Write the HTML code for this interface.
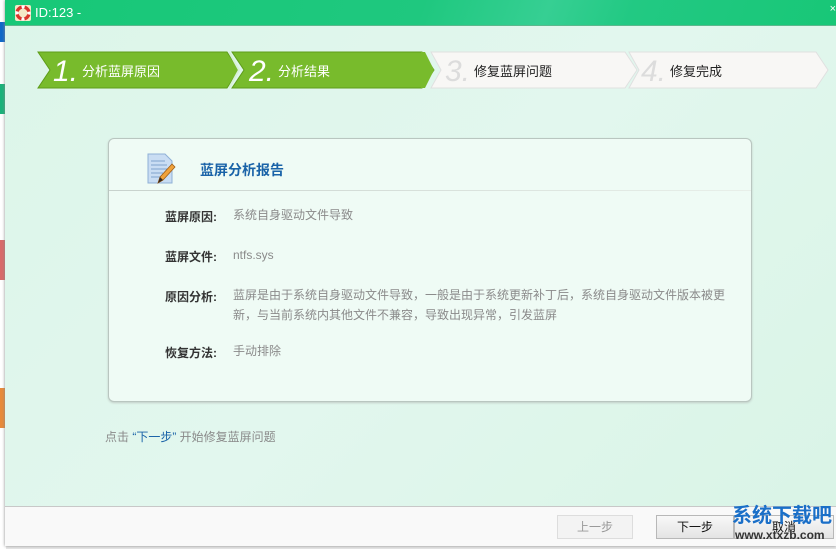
<!DOCTYPE html>
<html><head><meta charset="utf-8"><style>
*{margin:0;padding:0;box-sizing:border-box}
body{width:836px;height:549px;overflow:hidden;position:relative;background:#e8e8e8;font-family:"Liberation Sans","Noto Sans CJK SC",sans-serif;font-size:12px}
.left{position:absolute;left:0;top:0;width:6px;height:549px;background:#fff}
.win{position:absolute;left:5px;top:0;width:831px;height:546px;background:linear-gradient(135deg,#dcf5e9,#e2f7ee 50%,#d9f4e6);box-shadow:0 0 3px #888}
.title{position:absolute;left:0;top:0;width:831px;height:26px;background:linear-gradient(110deg,#17c877 0%,#1fc87f 50%,#36cf93 65%,#22c983 75%,#18c777 100%);border-bottom:1px solid #5cb88d;color:#fff;font-size:13px}
.card{position:absolute;left:103px;top:138px;width:644px;height:264px;background:#effbf5;border:1px solid #b9c6c0;border-radius:6px;box-shadow:0 1px 2px #c0ccc6}
.lbl{position:absolute;left:56px;font-weight:bold;color:#333;font-size:12px}
.val{position:absolute;left:124px;color:#8a8a8a;font-size:12px;line-height:20px}
.foot{position:absolute;left:0;top:506px;width:831px;height:40px;background:#f9f9f9;border-top:1px solid #c8c8c8}
.btn{position:absolute;top:515px;height:24px;border:1px solid #b8b8b8;background:linear-gradient(#f8f8f8,#e4e4e4);text-align:center;line-height:22px;font-size:12px}
</style></head><body>
<div class="left"><div style="position:absolute;top:22px;width:6px;height:20px;background:#1068c8"></div><div style="position:absolute;top:84px;width:6px;height:30px;background:#1ab27a"></div><div style="position:absolute;top:240px;width:6px;height:40px;background:#d96a6a"></div><div style="position:absolute;top:388px;width:6px;height:40px;background:#e88a3a"></div></div>
<div class="win">
<div class="title"><svg style="position:absolute;left:10px;top:5px" width="16" height="16" viewBox="0 0 16 16"><rect x="0" y="0" width="16" height="16" rx="2" fill="#f4e9c8"/><circle cx="8" cy="8" r="6" fill="none" stroke="#d9342b" stroke-width="3.2"/><circle cx="8" cy="8" r="6" fill="none" stroke="#fff" stroke-width="3.2" stroke-dasharray="3 6.4" stroke-dashoffset="1.5"/></svg><span style="position:absolute;left:30px;top:5px">ID:123 -</span><span style="position:absolute;right:0;top:3px;font-size:11px">×</span></div>
<svg style="position:absolute;left:0;top:0" width="831" height="100">
<polygon points="33,52 222,52 234,70 222,88 33,88 45,70" fill="#78bb2c" stroke="#5e9c1a"/>
<polygon points="227,52 417,52 429,70 417,88 227,88 239,70" fill="#78bb2c" stroke="#5e9c1a"/>
<polyline points="224,52 234,70 224,88" fill="none" stroke="#d8f0d8" stroke-width="2"/>
<polygon points="426,52 620,52 632,70 620,88 426,88 436,70" fill="#f8f7f5" stroke="#e0e0e0"/>
<polygon points="624,52 811,52 823,70 811,88 624,88 634,70" fill="#f8f7f5" stroke="#e0e0e0"/>
<polygon points="420,52 429,70 420,88 416,88 416,52" fill="#78bb2c"/>
<text x="48" y="81" font-size="30" font-style="italic" fill="#fff" font-family="Liberation Sans">1.</text>
<text x="244" y="81" font-size="30" font-style="italic" fill="#fff" font-family="Liberation Sans">2.</text>
<text x="440" y="81" font-size="30" font-style="italic" fill="#dcdcdc" font-family="Liberation Sans">3.</text>
<text x="636" y="81" font-size="30" font-style="italic" fill="#dcdcdc" font-family="Liberation Sans">4.</text>
<text x="77" y="76" font-size="13" fill="#fff" font-family="Liberation Sans,Noto Sans CJK SC">分析蓝屏原因</text>
<text x="273" y="76" font-size="13" fill="#fff" font-family="Liberation Sans,Noto Sans CJK SC">分析结果</text>
<text x="469" y="76" font-size="13" fill="#222" font-family="Liberation Sans,Noto Sans CJK SC">修复蓝屏问题</text>
<text x="665" y="76" font-size="13" fill="#222" font-family="Liberation Sans,Noto Sans CJK SC">修复完成</text>
</svg>
<div class="card">
<svg style="position:absolute;left:37px;top:13px" width="30" height="34" viewBox="0 0 30 34"><path d="M2 2h17l7 7v22H2z" fill="#c9ddf3" stroke="#8fb0d6"/><path d="M5 9h14M5 13h16M5 17h16M5 21h12M5 25h10" stroke="#7fa2cc"/><path d="M12 31l2-6 12-13 3 3-12 13z" fill="#f0a23a" stroke="#a0601a" stroke-width=".8"/><path d="M12 31l2-6 3 3z" fill="#3a2a1a"/></svg>
<div style="position:absolute;left:91px;top:21px;font-size:14px;font-weight:bold;color:#1a63a8">蓝屏分析报告</div>
<div style="position:absolute;left:0;top:51px;width:642px;height:1px;background:linear-gradient(90deg,#c8d2cd,#e8efe9)"></div>
<div class="lbl" style="top:69px">蓝屏原因:</div><div class="val" style="top:66px">系统自身驱动文件导致</div>
<div class="lbl" style="top:109px">蓝屏文件:</div><div class="val" style="top:106px">ntfs.sys</div>
<div class="lbl" style="top:149px">原因分析:</div><div class="val" style="top:146px;width:500px">蓝屏是由于系统自身驱动文件导致，一般是由于系统更新补丁后，系统自身驱动文件版本被更新，与当前系统内其他文件不兼容，导致出现异常，引发蓝屏</div>
<div class="lbl" style="top:205px">恢复方法:</div><div class="val" style="top:202px">手动排除</div>
</div>
<div style="position:absolute;left:100px;top:428px;color:#8a8a8a;font-size:12px">点击 <span style="color:#1a63a8">“下一步”</span> 开始修复蓝屏问题</div>
<div class="foot"></div>
<div class="btn" style="left:552px;width:76px;color:#999;background:#f3f3f3;border-color:#ddd">上一步</div>
<div class="btn" style="left:651px;width:78px;color:#111">下一步</div>
<div class="btn" style="left:729px;width:100px;color:#111">取消</div>
<div style="position:absolute;left:727px;top:499px;font-size:20px;font-weight:bold;color:#1a6fc8;white-space:nowrap">系统下载吧</div>
<div style="position:absolute;left:730px;top:528px;font-size:12px;font-weight:bold;color:#333;white-space:nowrap">www.xtxzb.com</div>
</div>
</body></html>
